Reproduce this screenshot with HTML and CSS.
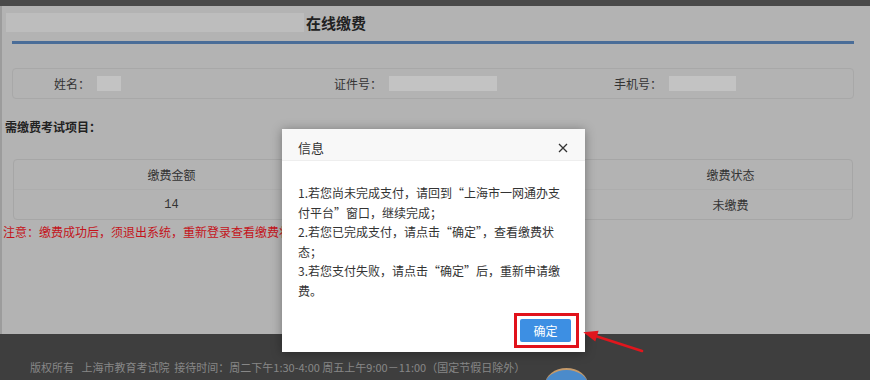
FILE: index.html
```html
<!DOCTYPE html>
<html lang="zh-CN">
<head>
    <meta charset="UTF-8">
    <meta name="viewport" content="width=device-width, initial-scale=1.0">
    <title>在线缴费</title>
    <link rel="stylesheet" href="styles.css">
</head>
<body>
    <div class="topbar"></div>
    <div class="main">
        <div class="head">
            <div class="head-row">
                <span class="head-mask"></span>
                <h2 class="head-title">在线缴费</h2>
            </div>
            <div class="head-line"></div>
        </div>
        <div class="info">
            <div class="info-item"><span>姓名：</span><i class="blank blank-name"></i></div>
            <div class="info-item"><span>证件号：</span><i class="blank blank-id"></i></div>
            <div class="info-item"><span>手机号：</span><i class="blank blank-phone"></i></div>
        </div>
        <h3 class="section-title">需缴费考试项目：</h3>
        <table class="fee-table">
            <tr>
                <th class="col-amount">缴费金额</th>
                <th></th>
                <th></th>
                <th class="col-status">缴费状态</th>
            </tr>
            <tr>
                <td class="num">14</td>
                <td></td>
                <td></td>
                <td>未缴费</td>
            </tr>
        </table>
        <p class="notice">注意：缴费成功后，须退出系统，重新登录查看缴费状态！</p>
    </div>
    <footer class="footer">
        <p>版权所有&nbsp;&nbsp;&nbsp;上海市教育考试院&nbsp;&nbsp;接待时间：周二下午1:30-4:00&nbsp;周五上午9:00－11:00（国定节假日除外）</p>
        <span class="float-btn"></span>
    </footer>

    <div class="modal">
        <div class="modal-head">
            <span>信息</span>
            <svg class="modal-close" width="10" height="10" viewBox="0 0 10 10">
                <path d="M1 1L9 9M9 1L1 9" stroke="#333" stroke-width="1.3" fill="none"/>
            </svg>
        </div>
        <div class="modal-body">
            <p>1.若您尚未完成支付，请回到“上海市一网通办支付平台”窗口，继续完成；</p>
            <p>2.若您已完成支付，请点击“确定”，查看缴费状态；</p>
            <p>3.若您支付失败，请点击“确定”后，重新申请缴费。</p>
        </div>
        <div class="modal-foot">
            <button class="btn-ok">确定</button>
        </div>
    </div>
    <div class="highlight"></div>
    <svg class="arrow" width="75" height="36" viewBox="0 0 75 36">
        <line x1="16" y1="13.4" x2="64" y2="29" stroke="#e0161d" stroke-width="2.6" stroke-linecap="round"/>
        <polygon points="5.3,10.3 20.6,8.8 17.3,19.6" fill="#e0161d"/>
    </svg>
</body>
</html>
```

FILE: styles.css
```css
* {
    margin: 0;
    padding: 0;
    box-sizing: border-box;
}

html, body {
    width: 870px;
    height: 380px;
    overflow: hidden;
}

body {
    position: relative;
    background-color: #b3b3b3;
    font-family: "Noto Sans CJK SC", sans-serif;
    color: #2b2b2b;
    box-shadow: inset 2px 0 #9c9c9c;
}

.topbar {
    height: 6px;
    background-color: #4a4a4a;
}

.main {
    height: 328px;
}

.head {
    padding-top: 7px;
}

.head-row {
    display: flex;
    align-items: center;
    height: 19px;
}

.head-mask {
    width: 298px;
    height: 19px;
    margin-left: 6px;
    background-color: #bdbdbd;
}

.head-title {
    font-size: 15px;
    font-weight: bold;
    line-height: 19px;
    margin-left: 2px;
    color: #222;
}

.head-line {
    height: 3px;
    margin: 9px 16px 0 12px;
    background-color: #4a6d98;
}

.info {
    display: grid;
    grid-template-columns: repeat(3, 1fr);
    align-items: center;
    height: 31px;
    margin: 24px 16px 0 12px;
    border: 1px solid #a8a8a8;
    border-radius: 4px;
    font-size: 12px;
    color: #333;
}

.info-item {
    display: flex;
    align-items: center;
    gap: 7px;
    padding-left: 41px;
}

.blank {
    height: 15px;
    background-color: #c3c3c3;
}

.blank-name { width: 24px; }
.blank-id { width: 108px; }
.blank-phone { width: 67px; }

.section-title {
    margin: 20px 0 0 5px;
    font-size: 12px;
    font-weight: bold;
    line-height: 16px;
    color: #222;
}

.fee-table {
    width: 840px;
    margin: 24px 0 0 13px;
    border: 1px solid #a6a6a6;
    border-radius: 4px;
    border-spacing: 0;
    font-size: 12px;
    color: #333;
    table-layout: fixed;
}

.fee-table th,
.fee-table td {
    text-align: center;
    font-weight: normal;
}

.fee-table th {
    height: 30px;
    border-bottom: 1px solid #adadad;
}

.fee-table td {
    height: 29px;
}

.col-amount { width: 315px; }
.col-status { width: 243px; }

.fee-table .num {
    font-family: "Liberation Mono", monospace;
    font-size: 12px;
}

.notice {
    margin: 5px 0 0 3px;
    font-size: 12px;
    line-height: 14px;
    color: #c3131b;
    white-space: nowrap;
}

.footer {
    position: relative;
    height: 46px;
    padding: 26px 0 0 30px;
    overflow: hidden;
    background-color: #3e3e3e;
    font-size: 11px;
    line-height: 14px;
    color: #878787;
}

.float-btn {
    position: absolute;
    left: 545px;
    top: 34px;
    width: 43px;
    height: 34px;
    border-radius: 50%;
    border-top: 2px solid #c59a6a;
    background-color: #4b8bcb;
}

.modal {
    position: absolute;
    left: 282px;
    top: 129px;
    width: 303px;
    height: 223px;
    display: flex;
    flex-direction: column;
    background: white;
    box-shadow: 0 1px 10px rgba(0,0,0,0.35);
}

.modal-head {
    display: flex;
    justify-content: space-between;
    align-items: center;
    height: 32px;
    padding: 6px 17px 0 16px;
    background-color: #f8f8f8;
    border-bottom: 1px solid #eee;
    font-size: 13px;
    color: #333;
}

.modal-body {
    flex: 1;
    padding: 22px 16px 0 16px;
    font-size: 12px;
    line-height: 19.5px;
    color: #333;
}

.modal-foot {
    display: flex;
    justify-content: flex-end;
    padding: 0 14px 10px 0;
}

.btn-ok {
    width: 51px;
    height: 23px;
    border: none;
    border-radius: 2px;
    background-color: #3d8fe3;
    color: white;
    font-family: "Noto Sans CJK SC", sans-serif;
    font-size: 12px;
}

.highlight {
    position: absolute;
    left: 514px;
    top: 313px;
    width: 65px;
    height: 35px;
    border: 3px solid #e1121b;
}

.arrow {
    position: absolute;
    left: 578px;
    top: 322px;
}
```
